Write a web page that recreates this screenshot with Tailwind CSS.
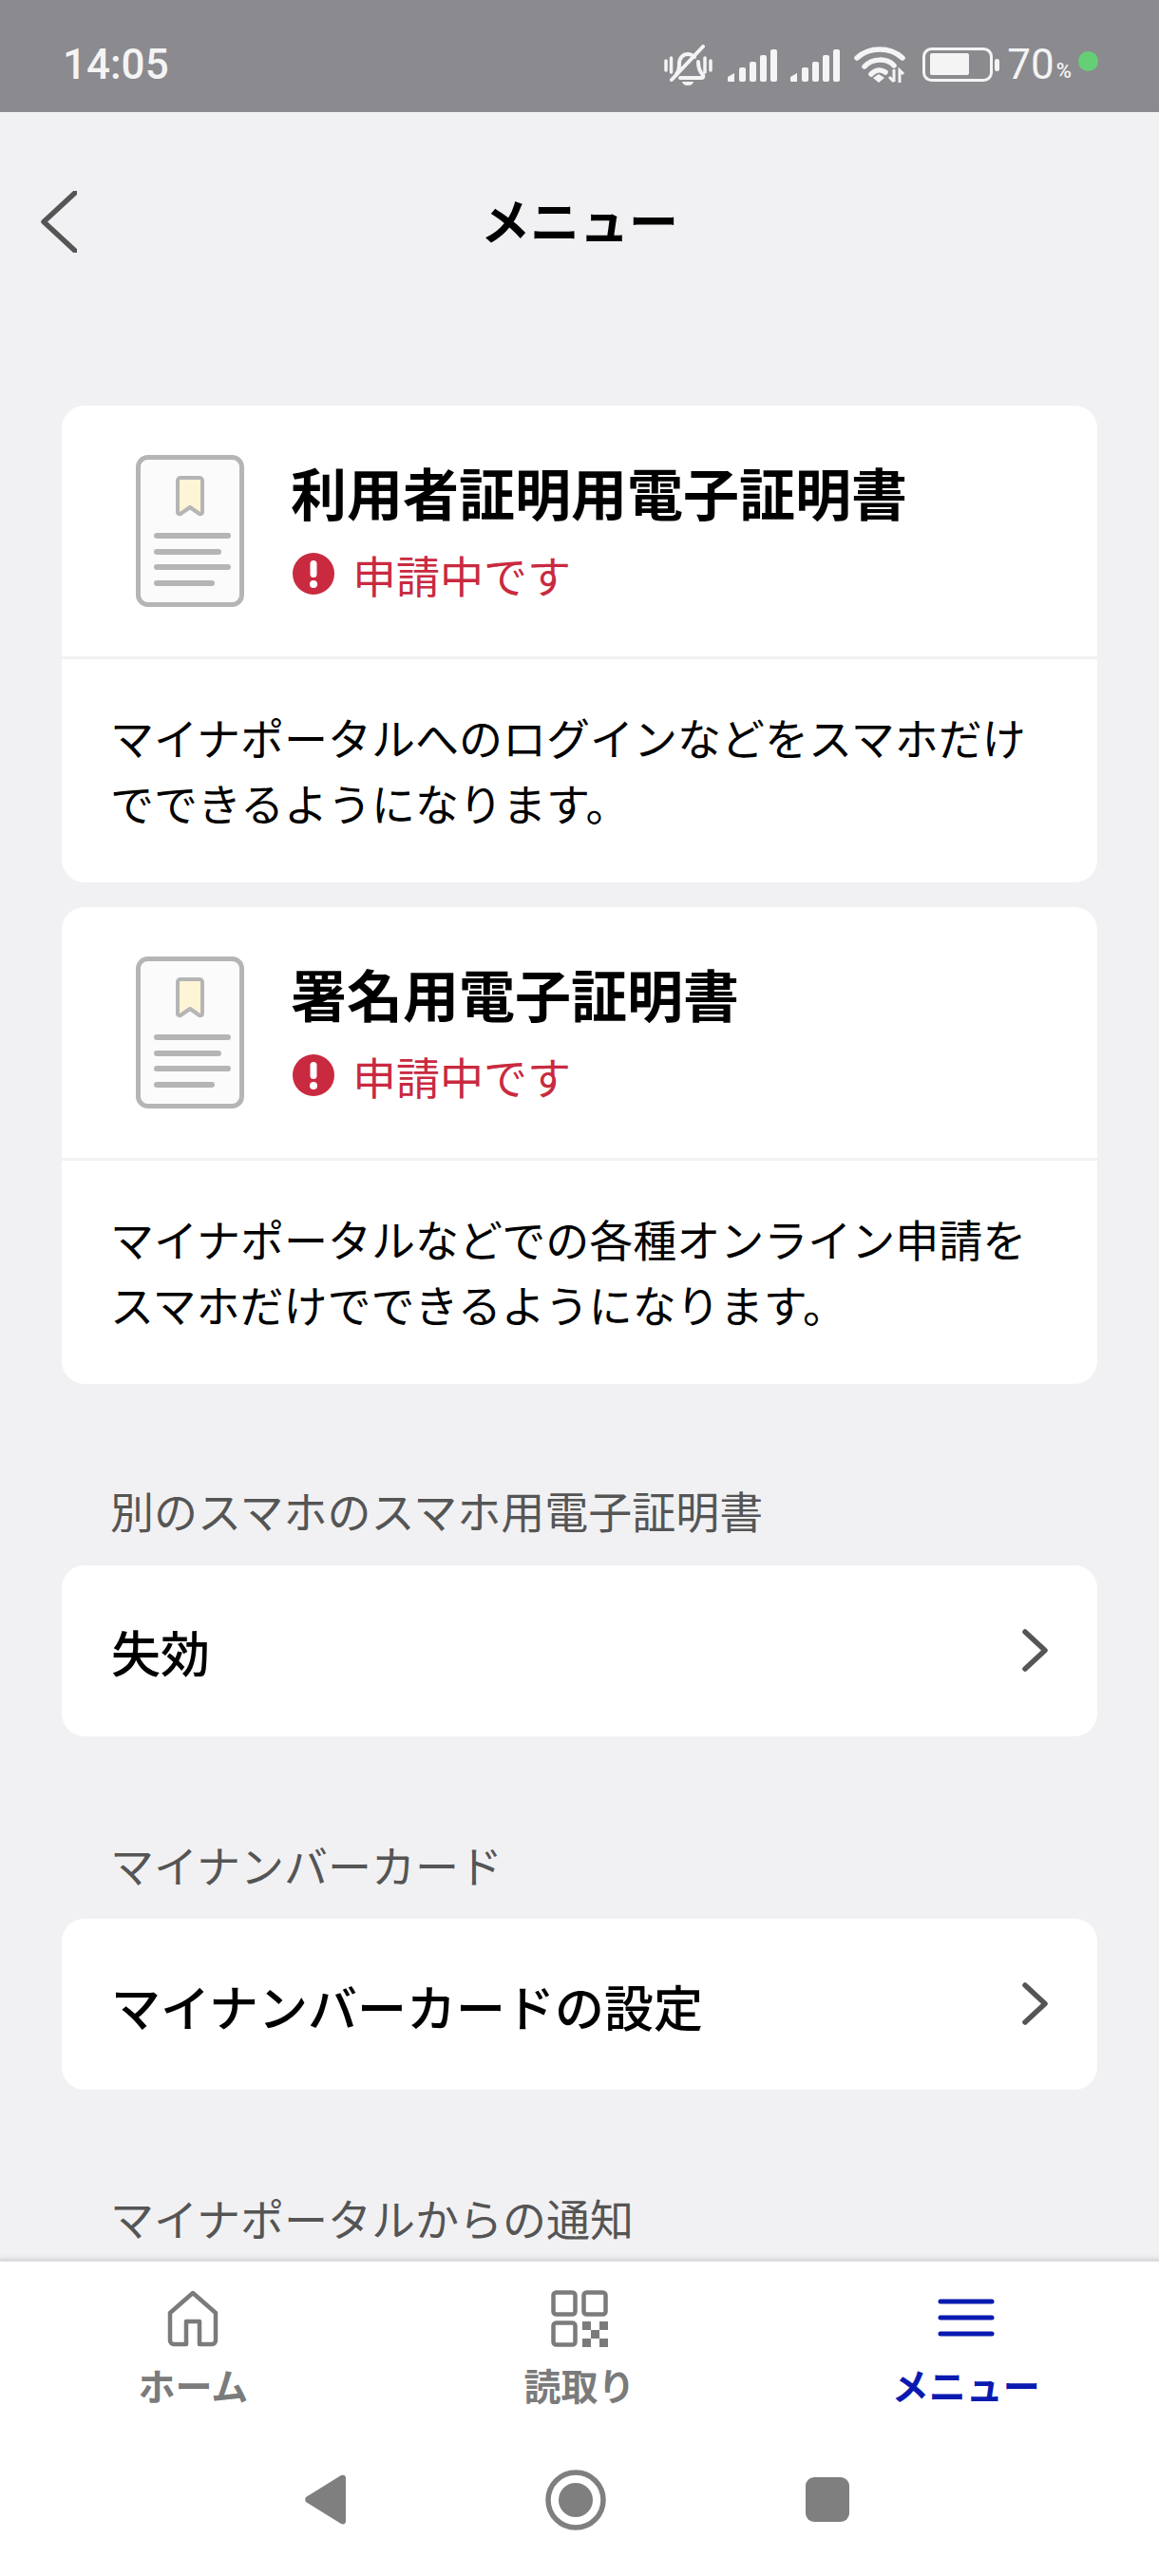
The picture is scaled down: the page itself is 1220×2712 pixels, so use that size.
<!DOCTYPE html>
<html lang="ja">
<head>
    <meta charset="UTF-8">
    <meta name="viewport" content="width=device-width, initial-scale=1.0">
    <title>メニュー</title>
    <script src="https://cdn.jsdelivr.net/npm/@tailwindcss/browser@4"></script>
</head>
<body class="bg-[#f1f1f3] font-['Noto_Sans_CJK_JP','Noto_Sans',sans-serif]">
<div class="flex flex-col h-[2712px] w-[1220px] overflow-hidden">

    <!-- status bar -->
    <div class="h-[118px] shrink-0 bg-[#8b8a8f] text-[#f4f4f4] flex items-center pl-[66px] pr-[64px] pt-[17px] font-['Roboto',sans-serif]">
        <span class="text-[44px] font-medium leading-none">14:05</span>
        <div class="ml-auto flex items-center h-[60px]">
            <!-- muted bell -->
            <svg width="52" height="44" viewBox="0 0 52 44" fill="none" stroke="#f4f4f4" class="mt-[2px]">
                <path d="M3 17v10M8.500 14v15M44 14v15M50 17v10" stroke-width="3.500" stroke-linecap="round" />
                <path d="M14 31c3-3 3-6 3-11 0-6 4-10 9-10 3 0 5 1 7 3M37 18c0 5 1 10 5 14 1 2 0 3-2 3H18" stroke-width="4" stroke-linecap="round" stroke-linejoin="round" />
                <path d="M9 37 42 2" stroke-width="4" stroke-linecap="round" />
                <path d="M20 39h12c-1 3-3 4-6 4s-5-1-6-4z" fill="#f4f4f4" stroke="none" />
            </svg>
            <!-- signal -->
            <svg width="52" height="34" viewBox="0 0 52 34" fill="#f4f4f4" class="ml-[16px] mt-[2px]">
                <path d="M0 29l7-4v9H1a1 1 0 0 1-1-1z" />
                <rect x="12" y="19" width="7" height="15" rx="2" />
                <rect x="23" y="13" width="7" height="21" rx="2" />
                <rect x="34" y="6" width="7" height="28" rx="2" />
                <rect x="45" y="0" width="7" height="34" rx="2" />
            </svg>
            <svg width="52" height="34" viewBox="0 0 52 34" fill="#f4f4f4" class="ml-[14px] mt-[2px]">
                <path d="M0 29l7-4v9H1a1 1 0 0 1-1-1z" />
                <rect x="12" y="19" width="7" height="15" rx="2" />
                <rect x="23" y="13" width="7" height="21" rx="2" />
                <rect x="34" y="6" width="7" height="28" rx="2" />
                <rect x="45" y="0" width="7" height="34" rx="2" />
            </svg>
            <!-- wifi -->
            <svg width="54" height="40" viewBox="0 0 54 40" fill="none" stroke="#f4f4f4" stroke-width="5.500" stroke-linecap="round" class="ml-[15px]">
                <path d="M3 13C16 1 38 1 51 13" />
                <path d="M11 22C19 13 35 13 42 21" />
                <path d="M18 30c5-5 11-5 15-2" />
                <path d="M20 34l6-4 6 4-6 5z" fill="#f4f4f4" stroke="none" />
                <path d="M42 25v13M42 38l-5-5M48 39V26l4 4" stroke-width="3" stroke-linecap="butt" />
            </svg>
            <!-- battery -->
            <svg width="81" height="36" viewBox="0 0 81 36" fill="none" class="ml-[18px]">
                <rect x="1.500" y="1.500" width="71" height="33" rx="8" stroke="#f4f4f4" stroke-width="3" />
                <rect x="8" y="6" width="41" height="23" rx="2" fill="#f4f4f4" />
                <rect x="76" y="12" width="5" height="13" rx="2.500" fill="#f4f4f4" />
            </svg>
            <span class="ml-[8px] text-[44px] leading-none">70</span>
            <span class="ml-[2px] text-[22px] font-medium leading-none mt-[14px]">%</span>
            <span class="ml-[7px] w-[21px] h-[21px] rounded-full bg-[#66cf76] mt-[-6px]"></span>
        </div>
    </div>

    <!-- title bar -->
    <header class="h-[232px] shrink-0 relative flex items-center justify-center">
        <svg width="38" height="65" viewBox="0 0 38 65" fill="none" stroke="#555" stroke-width="5.500" stroke-linecap="round" stroke-linejoin="round" class="absolute left-[43px] top-[83px]">
            <path d="M36 2 3 32.500 36 63" />
        </svg>
        <h1 class="text-[52px] font-bold text-black leading-none mt-[-6px]">メニュー</h1>
    </header>

    <!-- scrolling content -->
    <main class="flex-1 overflow-hidden px-[65px] pt-[77px]">
        <section class="bg-white rounded-[24px]">
            <div class="h-[267px] flex items-center pl-[78px] border-b-[3px] border-[#f1f1f3]">
                <svg width="114" height="160" viewBox="0 0 114 160" fill="none">
                    <rect x="2.500" y="2.500" width="109" height="155" rx="10" fill="#fbfbfb" stroke="#b5b5b5" stroke-width="5" />
                    <path d="M44 27a3 3 0 0 1 3-3h20a3 3 0 0 1 3 3v33a2 2 0 0 1-3 2l-10-7-10 7a2 2 0 0 1-3-2z" fill="#fdf5d6" stroke="#b5b5b5" stroke-width="4" stroke-linejoin="round" />
                    <path d="M22 85h75M22 102h65M22 118h75M22 135h58" stroke="#b5b5b5" stroke-width="6" stroke-linecap="round" />
                </svg>
                <div class="ml-[49px] pt-[4px]">
                    <h2 class="text-[59px] font-bold text-black leading-[84px]">利用者証明用電子証明書</h2>
                    <p class="flex items-center text-[46px] text-[#c92a40] leading-[84px] mt-[2px]">
                        <svg width="44" height="44" viewBox="0 0 44 44" class="ml-[2px] mr-[19px]">
                            <circle cx="22" cy="22" r="22" fill="#c92a40" />
                            <rect x="18.500" y="8" width="7" height="18" rx="3.500" fill="#fff" />
                            <circle cx="22" cy="33" r="4" fill="#fff" />
                        </svg>
                        申請中です
                    </p>
                </div>
            </div>
            <p class="px-[51px] pt-[47px] pb-[50px] text-[46px] leading-[69px] text-black whitespace-nowrap">マイナポータルへのログインなどをスマホだけ<br>でできるようになります。</p>
        </section>

        <section class="bg-white rounded-[24px] mt-[26px]">
            <div class="h-[267px] flex items-center pl-[78px] border-b-[3px] border-[#f1f1f3]">
                <svg width="114" height="160" viewBox="0 0 114 160" fill="none">
                    <rect x="2.500" y="2.500" width="109" height="155" rx="10" fill="#fbfbfb" stroke="#b5b5b5" stroke-width="5" />
                    <path d="M44 27a3 3 0 0 1 3-3h20a3 3 0 0 1 3 3v33a2 2 0 0 1-3 2l-10-7-10 7a2 2 0 0 1-3-2z" fill="#fdf5d6" stroke="#b5b5b5" stroke-width="4" stroke-linejoin="round" />
                    <path d="M22 85h75M22 102h65M22 118h75M22 135h58" stroke="#b5b5b5" stroke-width="6" stroke-linecap="round" />
                </svg>
                <div class="ml-[49px] pt-[4px]">
                    <h2 class="text-[59px] font-bold text-black leading-[84px]">署名用電子証明書</h2>
                    <p class="flex items-center text-[46px] text-[#c92a40] leading-[84px] mt-[2px]">
                        <svg width="44" height="44" viewBox="0 0 44 44" class="ml-[2px] mr-[19px]">
                            <circle cx="22" cy="22" r="22" fill="#c92a40" />
                            <rect x="18.500" y="8" width="7" height="18" rx="3.500" fill="#fff" />
                            <circle cx="22" cy="33" r="4" fill="#fff" />
                        </svg>
                        申請中です
                    </p>
                </div>
            </div>
            <p class="px-[51px] pt-[47px] pb-[50px] text-[46px] leading-[69px] text-black whitespace-nowrap">マイナポータルなどでの各種オンライン申請を<br>スマホだけでできるようになります。</p>
        </section>

        <h3 class="mt-[98px] mb-[24px] px-[51px] text-[46px] leading-[69px] text-[#555]">別のスマホのスマホ用電子証明書</h3>
        <a class="h-[180px] bg-white rounded-[24px] flex items-center justify-between pl-[52px] pr-[52px]">
            <span class="text-[52px] font-medium text-black mt-[2px]">失効</span>
            <svg width="27" height="45" viewBox="0 0 27 45" fill="none" stroke="#555" stroke-width="5.500" stroke-linecap="round" stroke-linejoin="round" class="mt-[-2px]"><path d="M3 3l21 19.500L3 42" /></svg>
        </a>

        <h3 class="mt-[100px] mb-[23px] px-[51px] text-[46px] leading-[69px] text-[#555]">マイナンバーカード</h3>
        <a class="h-[180px] bg-white rounded-[24px] flex items-center justify-between pl-[52px] pr-[52px]">
            <span class="text-[52px] font-medium text-black mt-[3px]">マイナンバーカードの設定</span>
            <svg width="27" height="45" viewBox="0 0 27 45" fill="none" stroke="#555" stroke-width="5.500" stroke-linecap="round" stroke-linejoin="round" class="mt-[-2px]"><path d="M3 3l21 19.500L3 42" /></svg>
        </a>

        <h3 class="mt-[100px] px-[51px] text-[46px] leading-[69px] text-[#555]">マイナポータルからの通知</h3>
    </main>

    <!-- tab bar -->
    <nav class="h-[199px] shrink-0 bg-white grid grid-cols-3 border-t-[3px] border-[#dcdcde] shadow-[0_-2px_4px_rgba(0,0,0,0.06)] relative">
        <div class="flex flex-col items-center pt-[30px]">
            <svg width="54" height="60" viewBox="0 0 54 60" fill="none" stroke="#7b7b7b" stroke-width="4.500" stroke-linejoin="round">
                <path d="M27 3 3 24v29a4 4 0 0 0 4 4h13V33h14v24h13a4 4 0 0 0 4-4V24z" />
            </svg>
            <span class="text-[39px] font-bold text-[#7b7b7b] leading-none mt-[20px]">ホーム</span>
        </div>
        <div class="flex flex-col items-center pt-[30px]">
            <svg width="60" height="60" viewBox="0 0 60 60" fill="none" stroke="#7b7b7b" stroke-width="4.500">
                <rect x="2.500" y="2.500" width="23" height="23" rx="3" />
                <rect x="34.500" y="2.500" width="23" height="23" rx="3" />
                <rect x="2.500" y="34.500" width="23" height="23" rx="3" />
                <path d="M33 33h9v9h-9zM51 33h9v9h-9zM42 42h9v9h-9zM33 51h9v9h-9zM51 51h9v9h-9z" fill="#7b7b7b" stroke="none" />
            </svg>
            <span class="text-[39px] font-bold text-[#7b7b7b] leading-none mt-[20px]">読取り</span>
        </div>
        <div class="flex flex-col items-center pt-[30px]">
            <svg width="60" height="60" viewBox="0 0 60 60" fill="none" stroke="#0a1ab0" stroke-width="5" stroke-linecap="round">
                <path d="M3 12h54M3 29h54M3 46h54" />
            </svg>
            <span class="text-[39px] font-bold text-[#0a1ab0] leading-none mt-[20px]">メニュー</span>
        </div>
    </nav>

    <!-- android buttons -->
    <div class="h-[135px] shrink-0 bg-white flex items-start justify-center gap-[210px] pr-[6px]">
        <svg width="43" height="53" viewBox="0 0 43 53" class="mt-[28px]"><path d="M1 24 38 1c3-1 5 0 5 3v45c0 3-2 4-5 3L1 29c-1-1-1-4 0-5z" fill="#7f7f7f" /></svg>
        <svg width="64" height="64" viewBox="0 0 64 64" class="mt-[23px]"><circle cx="32" cy="32" r="29" fill="none" stroke="#7f7f7f" stroke-width="5.500" /><circle cx="32" cy="32" r="18" fill="#7f7f7f" /></svg>
        <div class="w-[46px] h-[47px] rounded-[9px] bg-[#7f7f7f] mt-[31px]"></div>
    </div>
</div>
</body>
</html>
